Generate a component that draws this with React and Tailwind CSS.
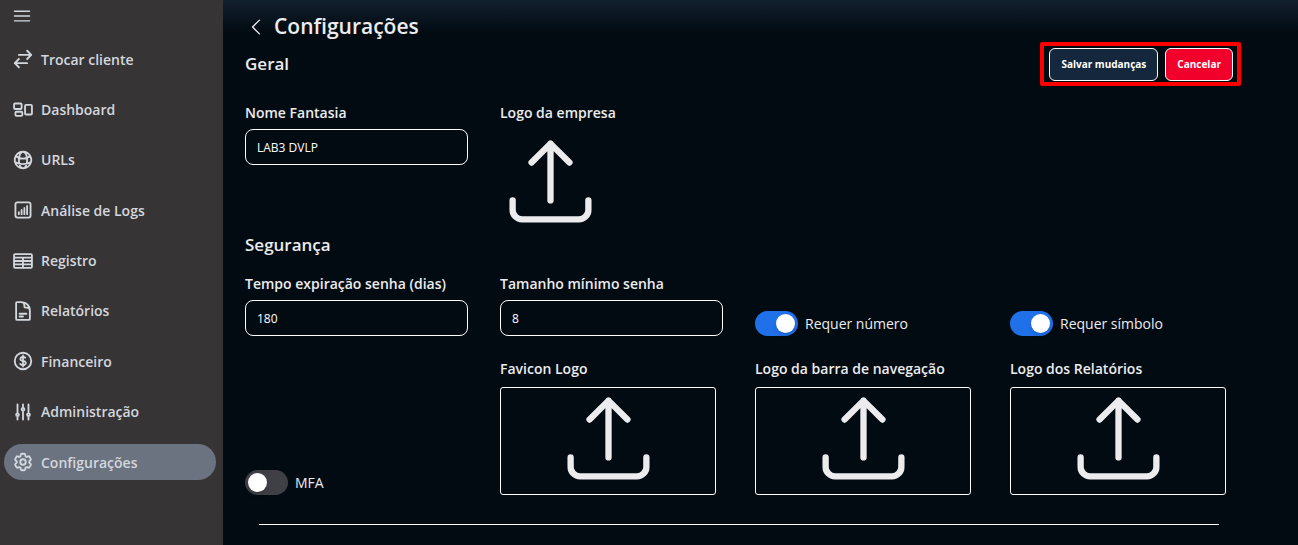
import { useState } from "react";
import {
  HiOutlineAdjustmentsVertical,
  HiOutlineArrowsRightLeft,
  HiOutlineArrowUpTray,
  HiOutlineBars3,
  HiOutlineChartBarSquare,
  HiOutlineChevronLeft,
  HiOutlineCog6Tooth,
  HiOutlineCurrencyDollar,
  HiOutlineDocumentText,
  HiOutlineGlobeAlt,
  HiOutlineRectangleGroup,
  HiOutlineTableCells,
} from "react-icons/hi2";

const menu = [
  { label: "Trocar cliente", icon: HiOutlineArrowsRightLeft },
  { label: "Dashboard", icon: HiOutlineRectangleGroup },
  { label: "URLs", icon: HiOutlineGlobeAlt },
  { label: "Análise de Logs", icon: HiOutlineChartBarSquare },
  { label: "Registro", icon: HiOutlineTableCells },
  { label: "Relatórios", icon: HiOutlineDocumentText },
  { label: "Financeiro", icon: HiOutlineCurrencyDollar },
  { label: "Administração", icon: HiOutlineAdjustmentsVertical },
  { label: "Configurações", icon: HiOutlineCog6Tooth, active: true },
];

const Sidebar = () => (
  <aside className="w-[223px] shrink-0 bg-[#373435] text-[#d3d7de]">
    <button type="button" aria-label="Menu" className="block ml-[11px] mt-[5px]">
      <HiOutlineBars3 className="size-[22px]" strokeWidth={1.5} />
    </button>
    <nav className="mt-3.5 pl-1 pr-[7px]">
      <ul className="flex flex-col justify-between h-[439px]">
        {menu.map(({ label, icon: Icon, active }) => (
          <li key={label}>
            <a
              href="#"
              aria-current={active ? "page" : undefined}
              className={`flex items-center gap-[7px] h-9 pl-2 rounded-full text-[14px] font-semibold ${
                active ? "bg-[#6b7280]" : ""
              }`}
            >
              <Icon className="size-[22px]" strokeWidth={2} />
              {label}
            </a>
          </li>
        ))}
      </ul>
    </nav>
  </aside>
);

const TextField = ({ id, label, value }) => (
  <div>
    <label htmlFor={id} className="block text-[14px] leading-5 font-semibold">
      {label}
    </label>
    <input
      id={id}
      type="text"
      defaultValue={value}
      className="mt-1.5 block w-full h-9 px-[11px] rounded-lg border border-white bg-transparent text-[12px] text-white"
    />
  </div>
);

const UploadField = ({ id, label, framed }) => (
  <div>
    <label htmlFor={id} className="block cursor-pointer">
      <span className="block text-[14px] leading-5 font-semibold">{label}</span>
      <span
        className={`mt-2 block ${
          framed
            ? "h-[108px] mr-[7px] rounded-[3px] border border-white"
            : "h-[100px]"
        }`}
      >
        <HiOutlineArrowUpTray
          className={`size-[101px] ${framed ? "mx-auto" : ""}`}
        />
      </span>
    </label>
    <input id={id} type="file" className="sr-only" />
  </div>
);

const Toggle = ({ id, label, initial }) => {
  const [checked, setChecked] = useState(initial);

  return (
    <div className="flex items-center gap-[7px] h-[25px] self-end">
      <input
        id={id}
        type="checkbox"
        role="switch"
        checked={checked}
        onChange={(e) => setChecked(e.target.checked)}
        className="appearance-none flex items-center w-[43px] h-[25px] px-[3px] rounded-full bg-[#3f3f46] checked:bg-[#2070ea] checked:justify-end before:size-[19px] before:rounded-full before:bg-white before:shadow-md"
      />
      <label htmlFor={id} className="text-[14px] leading-5">
        {label}
      </label>
    </div>
  );
};

const App = () => {
  return (
    <div className="flex min-h-screen font-['Open_Sans','Noto_Sans',sans-serif]">
      <Sidebar />
      <main className="flex-1 min-w-0 bg-[#030b12] bg-linear-to-b from-[#13202f] to-[#030b12] to-[32px] pt-[11px] pl-[22px] pr-[65px] pb-5 text-[#ececee]">
        <div className="flex items-center gap-[7px] h-8">
          <button type="button" aria-label="Voltar">
            <HiOutlineChevronLeft className="size-[22px]" />
          </button>
          <h1 className="text-[21px] font-semibold">Configurações</h1>
        </div>

        <div className="flex items-center justify-between -mt-px -mr-2">
          <h2 className="text-[17px] leading-7 font-semibold">Geral</h2>
          <div className="flex gap-[7px] border-4 border-[#fe0000] rounded-xs pl-[5px] pr-1 pt-0.5 pb-px">
            <button
              type="button"
              className="h-[33px] px-[11px] rounded-md border border-white bg-[#14273d] text-[10px] font-bold text-white"
            >
              Salvar mudanças
            </button>
            <button
              type="button"
              className="h-[33px] px-[11px] rounded-md border border-white bg-[#f2002c] text-[10px] font-bold text-white"
            >
              Cancelar
            </button>
          </div>
        </div>

        <div className="grid grid-cols-4 gap-x-8 mt-[17px]">
          <TextField id="nome" label="Nome Fantasia" value="LAB3 DVLP" />
          <UploadField id="logo-empresa" label="Logo da empresa" />
        </div>

        <h2 className="text-[17px] leading-7 font-semibold">Segurança</h2>

        <div className="grid grid-cols-4 gap-x-8 gap-y-[23px] mt-[15px]">
          <TextField
            id="expiracao"
            label="Tempo expiração senha (dias)"
            value="180"
          />
          <TextField id="tamanho" label="Tamanho mínimo senha" value="8" />
          <Toggle id="numero" label="Requer número" initial={true} />
          <Toggle id="simbolo" label="Requer símbolo" initial={true} />
          <Toggle id="mfa" label="MFA" initial={false} />
          <UploadField id="favicon" label="Favicon Logo" framed />
          <UploadField id="logo-nav" label="Logo da barra de navegação" framed />
          <UploadField id="logo-rel" label="Logo dos Relatórios" framed />
        </div>

        <hr className="mt-[29px] mx-3.5 border-white" />
      </main>
    </div>
  );
};

export default App;
